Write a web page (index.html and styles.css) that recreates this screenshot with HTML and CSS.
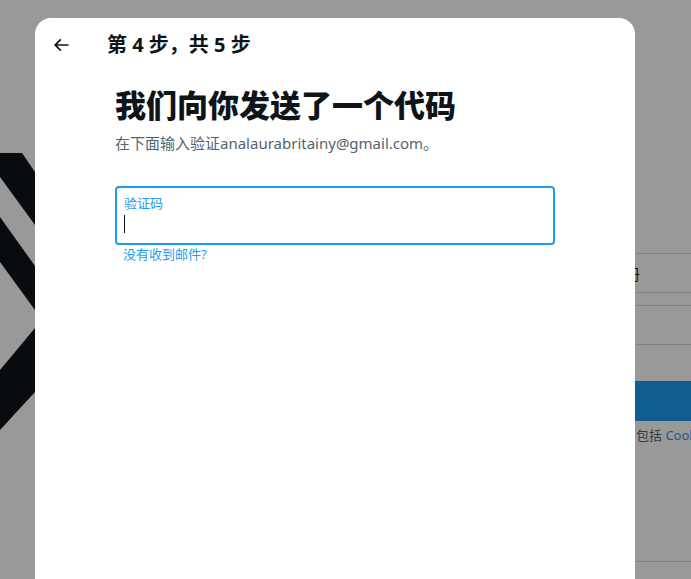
FILE: index.html
```html
<!DOCTYPE html>
<html lang="zh-CN">
<head>
  <meta charset="UTF-8">
  <meta name="viewport" content="width=device-width, initial-scale=1.0">
  <title>验证码</title>
  <link rel="stylesheet" href="styles.css">
</head>
<body>
  <div class="page">
    <div class="logo-col">
      <svg class="logo" viewBox="0 0 35 579" width="35" height="579">
        <polygon points="0,153 22,153 35,172 35,225 0,177" fill="#0f1419"/>
        <polygon points="0,217 35,266 35,310 0,262" fill="#0f1419"/>
        <polygon points="0,370 35,328 35,392 0,430" fill="#0f1419"/>
      </svg>
    </div>
    <div class="form-col">
      <div class="bg-field"><span>注册</span></div>
      <div class="bg-field"></div>
      <div class="bg-btn">下一步</div>
      <p class="bg-note">包括 <span class="bg-link">Cookie 使用</span></p>
      <div class="bg-rule"></div>
    </div>
  </div>
  <div class="overlay"></div>

  <div class="modal">
    <div class="modal-header">
      <button class="back-btn" aria-label="返回">
        <svg viewBox="0 0 24 24" width="20" height="20"><path d="M7.414 13l5.043 5.04-1.414 1.42L3.586 12l7.457-7.46 1.414 1.42L7.414 11H21v2H7.414z" fill="#0f1419"/></svg>
      </button>
      <h2 class="step">第 4 步，共 5 步</h2>
    </div>

    <div class="modal-body">
      <h1>我们向你发送了一个代码</h1>
      <p class="subtitle">在下面输入验证analaurabritainy@gmail.com。</p>

      <label class="code-field">
        <span class="code-label">验证码</span>
        <span class="code-input"><span class="caret"></span></span>
      </label>
      <a class="resend">没有收到邮件?</a>
    </div>
  </div>
</body>
</html>
```

FILE: styles.css
```css
* { margin: 0; padding: 0; box-sizing: border-box; }
body { font-family: "Segoe UI", "Noto Sans", "Noto Sans CJK SC", sans-serif; color: #0f1419; background: white; width: 691px; height: 579px; overflow: hidden; }

.page { display: flex; height: 579px; overflow: hidden; }
.logo-col { width: 35px; flex-shrink: 0; }
.logo { display: block; }
.form-col { margin-left: 500px; padding-top: 253px; width: 440px; flex-shrink: 0; display: flex; flex-direction: column; }
.bg-field { height: 40px; border-top: 1px solid #cfd9de; border-bottom: 1px solid #cfd9de; display: flex; align-items: center; padding-left: 75px; font-size: 15px; margin-bottom: 12px; }
.bg-btn { margin-top: 24px; height: 40px; background: #1d9bf0; color: white; border-radius: 20px; display: flex; align-items: center; justify-content: center; font-weight: 700; }
.bg-note { margin-top: 4px; font-size: 13px; color: #536471; padding-left: 101px; }
.bg-link { color: #1d9bf0; }
.bg-rule { margin-top: 117px; border-top: 1px solid #cfd9de; }

.overlay { position: fixed; inset: 0; background: rgba(0,0,0,0.4); }

.modal { position: absolute; left: 35px; top: 18px; width: 600px; height: 600px; background: white; border-radius: 16px; }
.modal-header { height: 53px; display: flex; align-items: center; padding-left: 16px; }
.back-btn { width: 20px; height: 20px; border: none; background: none; display: flex; }
.step { margin-left: 36px; font-size: 20px; font-weight: 700; line-height: 24px; }

.modal-body { padding: 0 80px; }
h1 { margin-top: 16px; font-size: 31px; font-weight: 800; line-height: 36px; }
.subtitle { margin-top: 10px; font-size: 15px; line-height: 20px; color: #536471; }

.code-field { display: flex; flex-direction: column; margin-top: 33px; height: 59px; border: 2px solid #1d9bf0; border-radius: 4px; padding: 7px 7px 0; }
.code-label { font-size: 13px; line-height: 16px; color: #1d9bf0; }
.code-input { display: flex; align-items: center; height: 26px; }
.caret { width: 1px; height: 18px; background: #0f1419; }
.resend { display: block; margin-top: 1px; padding-left: 8px; font-size: 13px; line-height: 16px; color: #1d9bf0; }
```
